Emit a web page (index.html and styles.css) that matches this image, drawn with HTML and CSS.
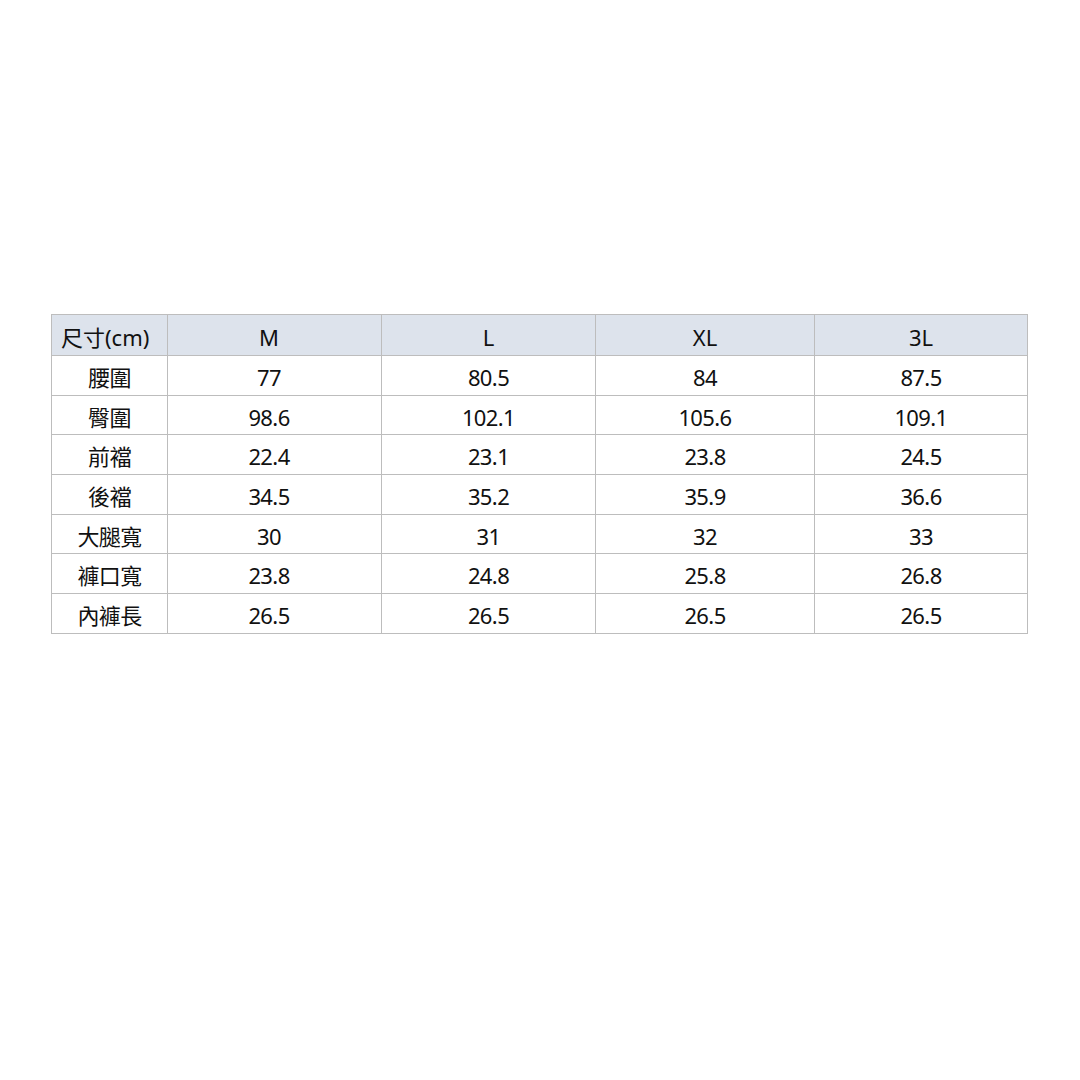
FILE: index.html
```html
<!DOCTYPE html>
<html lang="zh-Hant">
<head>
<meta charset="utf-8">
<link rel="stylesheet" href="styles.css">
</head>
<body>
<div class="page">
<table class="size-table">
<colgroup>
<col class="c0"><col class="c1"><col class="c2"><col class="c3"><col class="c4">
</colgroup>
<thead>
<tr><th class="label-h">尺寸(cm)</th><th class="m">M</th><th>L</th><th>XL</th><th>3L</th></tr>
</thead>
<tbody>
<tr><td>腰圍</td><td class="m">77</td><td>80.5</td><td>84</td><td>87.5</td></tr>
<tr><td>臀圍</td><td class="m">98.6</td><td>102.1</td><td>105.6</td><td>109.1</td></tr>
<tr><td>前襠</td><td class="m">22.4</td><td>23.1</td><td>23.8</td><td>24.5</td></tr>
<tr><td>後襠</td><td class="m">34.5</td><td>35.2</td><td>35.9</td><td>36.6</td></tr>
<tr><td>大腿寬</td><td class="m">30</td><td>31</td><td>32</td><td>33</td></tr>
<tr><td>褲口寬</td><td class="m">23.8</td><td>24.8</td><td>25.8</td><td>26.8</td></tr>
<tr><td>內褲長</td><td class="m">26.5</td><td>26.5</td><td>26.5</td><td>26.5</td></tr>
</tbody>
</table>
</div>
</body>
</html>
```
FILE: styles.css
```css
html, body {
  margin: 0;
  padding: 0;
  background: #ffffff;
}
.page {
  width: 1080px;
  height: 1080px;
  padding: 314px 0 0 51px;
  box-sizing: border-box;
}
.size-table {
  border-collapse: collapse;
  table-layout: fixed;
  width: 976px;
  font-family: "Noto Sans", "Noto Sans CJK TC", sans-serif;
  font-size: 22px;
  color: #111;
}
.c0 { width: 116px; }
.c1 { width: 214px; }
.c2 { width: 214px; }
.c3 { width: 219px; }
.c4 { width: 213px; }
.size-table th,
.size-table td {
  border: 1px solid #bdbdbd;
  text-align: center;
  padding: 0;
  font-weight: normal;
  line-height: 1;
}
.size-table th {
  background: #dde3ec;
  height: 41px;
  padding-top: 4px;
  box-sizing: border-box;
}
.size-table td {
  height: 39.7px;
  padding-top: 3px;
  box-sizing: border-box;
  letter-spacing: -0.6px;
}
.size-table .m {
  padding-right: 11px;
}
.size-table .label-h {
  text-align: left;
  padding-left: 9px;
}
```
